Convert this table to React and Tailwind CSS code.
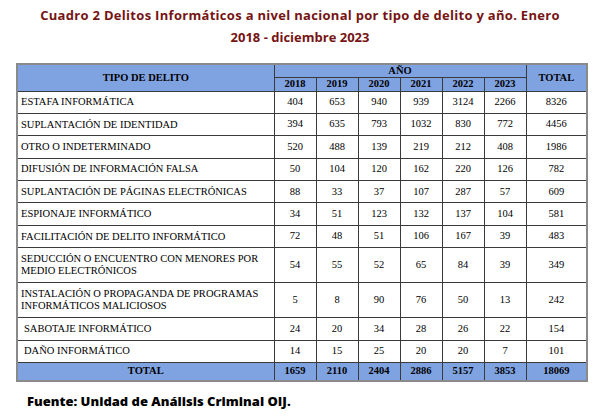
import React from 'react';

const rows = [
  { label: 'ESTAFA INFORMÁTICA', values: [404, 653, 940, 939, 3124, 2266], total: 8326 },
  { label: 'SUPLANTACIÓN DE IDENTIDAD', values: [394, 635, 793, 1032, 830, 772], total: 4456 },
  { label: 'OTRO O INDETERMINADO', values: [520, 488, 139, 219, 212, 408], total: 1986 },
  { label: 'DIFUSIÓN DE INFORMACIÓN FALSA', values: [50, 104, 120, 162, 220, 126], total: 782 },
  { label: 'SUPLANTACIÓN DE PÁGINAS ELECTRÓNICAS', values: [88, 33, 37, 107, 287, 57], total: 609 },
  { label: 'ESPIONAJE INFORMÁTICO', values: [34, 51, 123, 132, 137, 104], total: 581 },
  { label: 'FACILITACIÓN DE DELITO INFORMÁTICO', values: [72, 48, 51, 106, 167, 39], total: 483 },
  { label: 'SEDUCCIÓN O ENCUENTRO CON MENORES POR MEDIO ELECTRÓNICOS', values: [54, 55, 52, 65, 84, 39], total: 349, tall: true },
  { label: 'INSTALACIÓN O PROPAGANDA DE PROGRAMAS INFORMÁTICOS MALICIOSOS', values: [5, 8, 90, 76, 50, 13], total: 242, tall: true },
  { label: 'SABOTAJE INFORMÁTICO', values: [24, 20, 34, 28, 26, 22], total: 154, indent: true },
  { label: 'DAÑO INFORMÁTICO', values: [14, 15, 25, 20, 20, 7], total: 101, indent: true },
];

const years = [2018, 2019, 2020, 2021, 2022, 2023];
const totals = [1659, 2110, 2404, 2886, 5157, 3853];

const cell = 'border border-[#3a3a3a] text-center leading-none';

export default function App() {
  return (
    <div className="w-[600px] h-[416px] bg-white overflow-hidden">
      <div className="pt-[4px] text-center text-[#761414] font-bold text-[13px] leading-[22px] font-['Open_Sans',sans-serif]">
        <div className="tracking-[0.3px]">
          Cuadro 2 Delitos Informáticos a nivel nacional por tipo de delito y año. Enero
        </div>
        <div>2018 - diciembre 2023</div>
      </div>

      <div className="mt-[15px] pl-[16px]">
        <table className="w-[570px] border-collapse border-2 border-[#8a8a8a] text-[10.5px] text-black table-fixed font-['Liberation_Serif','Times_New_Roman',serif]">
          <colgroup>
            <col className="w-[257px]" />
            {years.map((y) => (
              <col key={y} className="w-[42px]" />
            ))}
            <col className="w-[61px]" />
          </colgroup>
          <thead>
            <tr className="bg-[#7fa2e0] h-[13px]">
              <th rowSpan={2} className={`${cell} font-bold`}>
                TIPO DE DELITO
              </th>
              <th colSpan={6} className={`${cell} font-bold h-[13px]`}>
                AÑO
              </th>
              <th rowSpan={2} className={`${cell} font-bold`}>
                TOTAL
              </th>
            </tr>
            <tr className="bg-[#7fa2e0] h-[14px]">
              {years.map((y) => (
                <th key={y} className={`${cell} font-bold`}>
                  {y}
                </th>
              ))}
            </tr>
          </thead>
          <tbody>
            {rows.map((r) => (
              <tr key={r.label} className={r.tall ? 'h-[35px]' : 'h-[22.4px]'}>
                <td
                  className={
                    r.indent
                      ? 'border border-[#3a3a3a] text-left leading-[12px] pl-[6px] pr-[4px]'
                      : 'border border-[#3a3a3a] text-left leading-[12px] pl-[3px] pr-[4px]'
                  }
                >
                  {r.label}
                </td>
                {r.values.map((v, i) => (
                  <td key={i} className={cell}>
                    {v}
                  </td>
                ))}
                <td className={cell}>{r.total}</td>
              </tr>
            ))}
            <tr className="bg-[#7fa2e0] h-[18px] font-bold">
              <td className={cell}>TOTAL</td>
              {totals.map((v, i) => (
                <td key={i} className={cell}>
                  {v}
                </td>
              ))}
              <td className={cell}>18069</td>
            </tr>
          </tbody>
        </table>
      </div>

      <div className="mt-[10px] pl-[27px] text-[13px] font-extrabold text-black leading-[18px] font-['Open_Sans',sans-serif]">
        Fuente: Unidad de Análisis Criminal OIJ.
      </div>
    </div>
  );
}
